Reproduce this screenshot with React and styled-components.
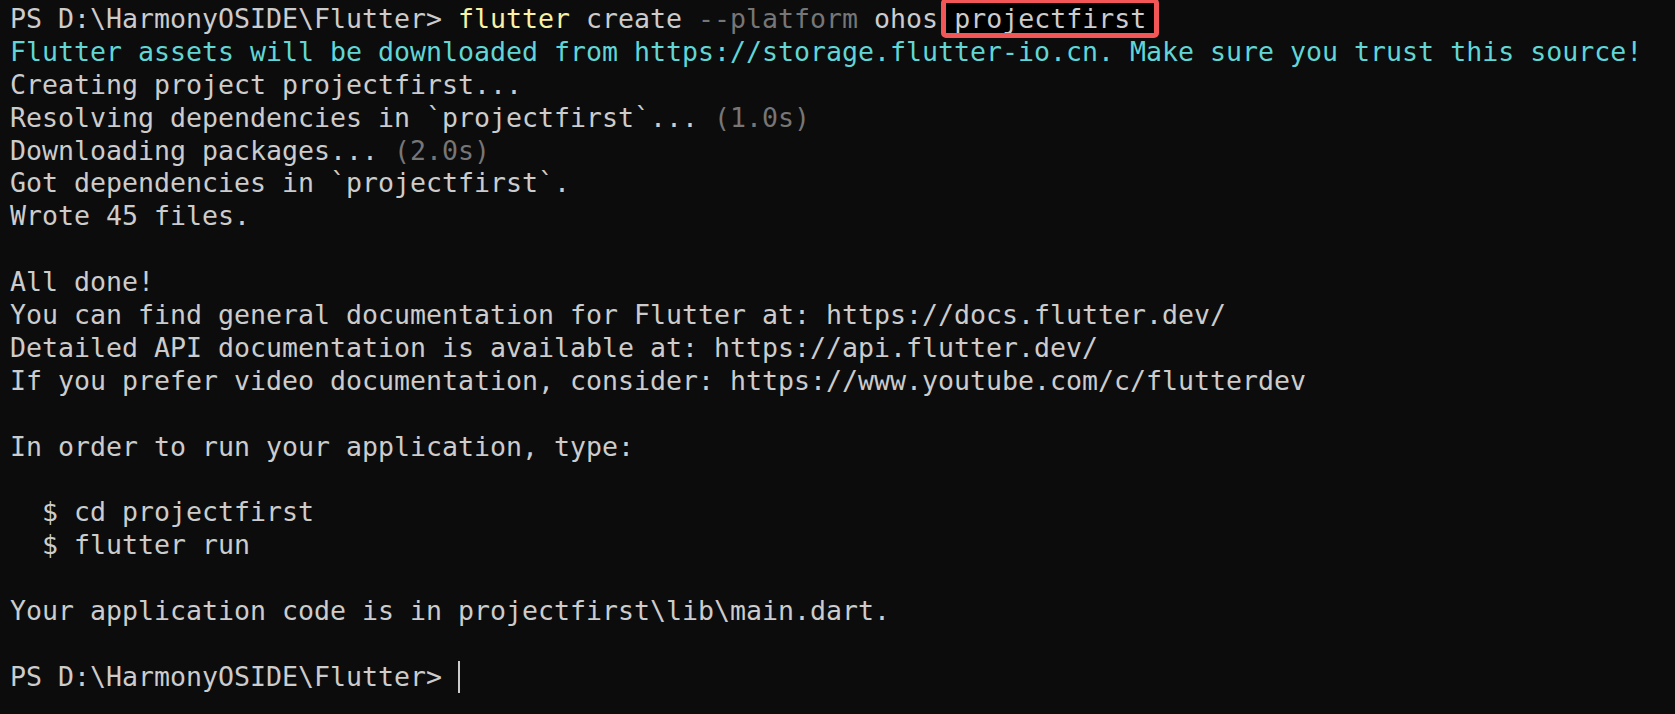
import React from "react";
import styled, { createGlobalStyle } from "styled-components";

const Global = createGlobalStyle`
  html, body {
    margin: 0;
    padding: 0;
    background: #0c0c0c;
  }
`;

const Terminal = styled.div`
  min-height: 100vh;
  box-sizing: border-box;
  padding: 3px 10px 0;
  display: grid;
  grid-auto-rows: 32.9px;
  align-content: start;
  background: #0c0c0c;
  color: #cccccc;
  font-family: "DejaVu Sans Mono", "Liberation Mono", monospace;
  font-size: 26.58px;
  line-height: 32.9px;
`;

const Line = styled.div`
  white-space: pre;
  color: ${(p) => p.$color || "#cccccc"};
`;

const Tone = styled.span`
  color: ${(p) => (p.$tone === "cmd" ? "#f9f1a5" : "#767676")};
`;

// red annotation box drawn over the project name
const Marked = styled.span`
  position: relative;
  isolation: isolate;
  &::before {
    content: "";
    position: absolute;
    left: -9px;
    right: -9px;
    top: 0px;
    bottom: -1px;
    background: #000;
    z-index: -1;
  }
  &::after {
    content: "";
    position: absolute;
    left: -13px;
    right: -13px;
    top: -5px;
    bottom: -4px;
    border: 5px solid #f35656;
    border-radius: 5px;
  }
`;

const Cursor = styled.span`
  display: inline-block;
  width: 2px;
  height: 32px;
  background: #cccccc;
  vertical-align: -7px;
`;

const prompt = "PS D:\\HarmonyOSIDE\\Flutter> ";

export default function App() {
  return (
    <>
      <Global />
      <Terminal>
        <Line>
          {prompt}
          <Tone $tone="cmd">flutter</Tone> create <Tone>--platform</Tone> ohos{" "}
          <Marked>projectfirst</Marked>
        </Line>
        <Line $color="#61d6d6">
          Flutter assets will be downloaded from https://storage.flutter-io.cn. Make sure you trust this source!
        </Line>
        <Line>Creating project projectfirst...</Line>
        <Line>
          Resolving dependencies in `projectfirst`... <Tone>(1.0s)</Tone>
        </Line>
        <Line>
          Downloading packages... <Tone>(2.0s)</Tone>
        </Line>
        <Line>Got dependencies in `projectfirst`.</Line>
        <Line>Wrote 45 files.</Line>
        <Line />
        <Line>All done!</Line>
        <Line>You can find general documentation for Flutter at: https://docs.flutter.dev/</Line>
        <Line>Detailed API documentation is available at: https://api.flutter.dev/</Line>
        <Line>If you prefer video documentation, consider: https://www.youtube.com/c/flutterdev</Line>
        <Line />
        <Line>In order to run your application, type:</Line>
        <Line />
        <Line>{"  $ cd projectfirst"}</Line>
        <Line>{"  $ flutter run"}</Line>
        <Line />
        <Line>Your application code is in projectfirst\lib\main.dart.</Line>
        <Line />
        <Line>
          {prompt}
          <Cursor />
        </Line>
      </Terminal>
    </>
  );
}
